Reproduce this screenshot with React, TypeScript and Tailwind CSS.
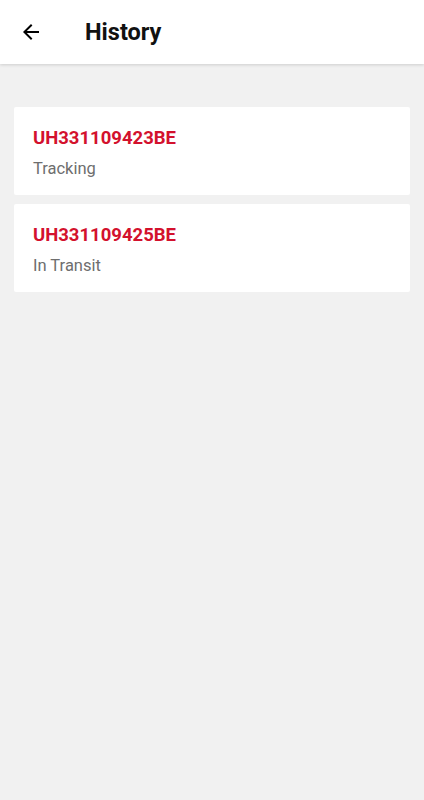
import { useState } from 'react';

type Item = { code: string; status: string };

const items: Item[] = [
  { code: 'UH331109423BE', status: 'Tracking' },
  { code: 'UH331109425BE', status: 'In Transit' },
];

export default function App() {
  const [history] = useState<Item[]>(items);

  return (
    <div className="min-h-screen w-full bg-[#f1f1f1] font-['Roboto',sans-serif]">
      {/* Header */}
      <div className="flex h-16 items-center bg-white shadow-[0_1px_3px_rgba(0,0,0,0.15)]">
        <button className="ml-[17px] flex h-7 w-7 items-center justify-center text-black">
          <svg width="24" height="24" viewBox="0 0 24 24" fill="currentColor">
            <path d="M20 11H7.83l5.59-5.59L12 4l-8 8 8 8 1.41-1.41L7.83 13H20v-2z" />
          </svg>
        </button>
        <h1 className="ml-10 mt-[2px] text-[23.5px] font-bold text-[#111]">History</h1>
      </div>

      {/* List */}
      <div className="flex flex-col gap-[9px] px-[14px] pt-[43px]">
        {history.map((item) => (
          <div key={item.code} className="h-[88px] rounded-[2px] bg-white px-[19px] pt-[19px]">
            <p className="text-[18.5px] font-bold leading-6 text-[#d3112d]">{item.code}</p>
            <p className="mt-[9px] text-[16.5px] leading-5 text-[#6e6e6e]">{item.status}</p>
          </div>
        ))}
      </div>
    </div>
  );
}
